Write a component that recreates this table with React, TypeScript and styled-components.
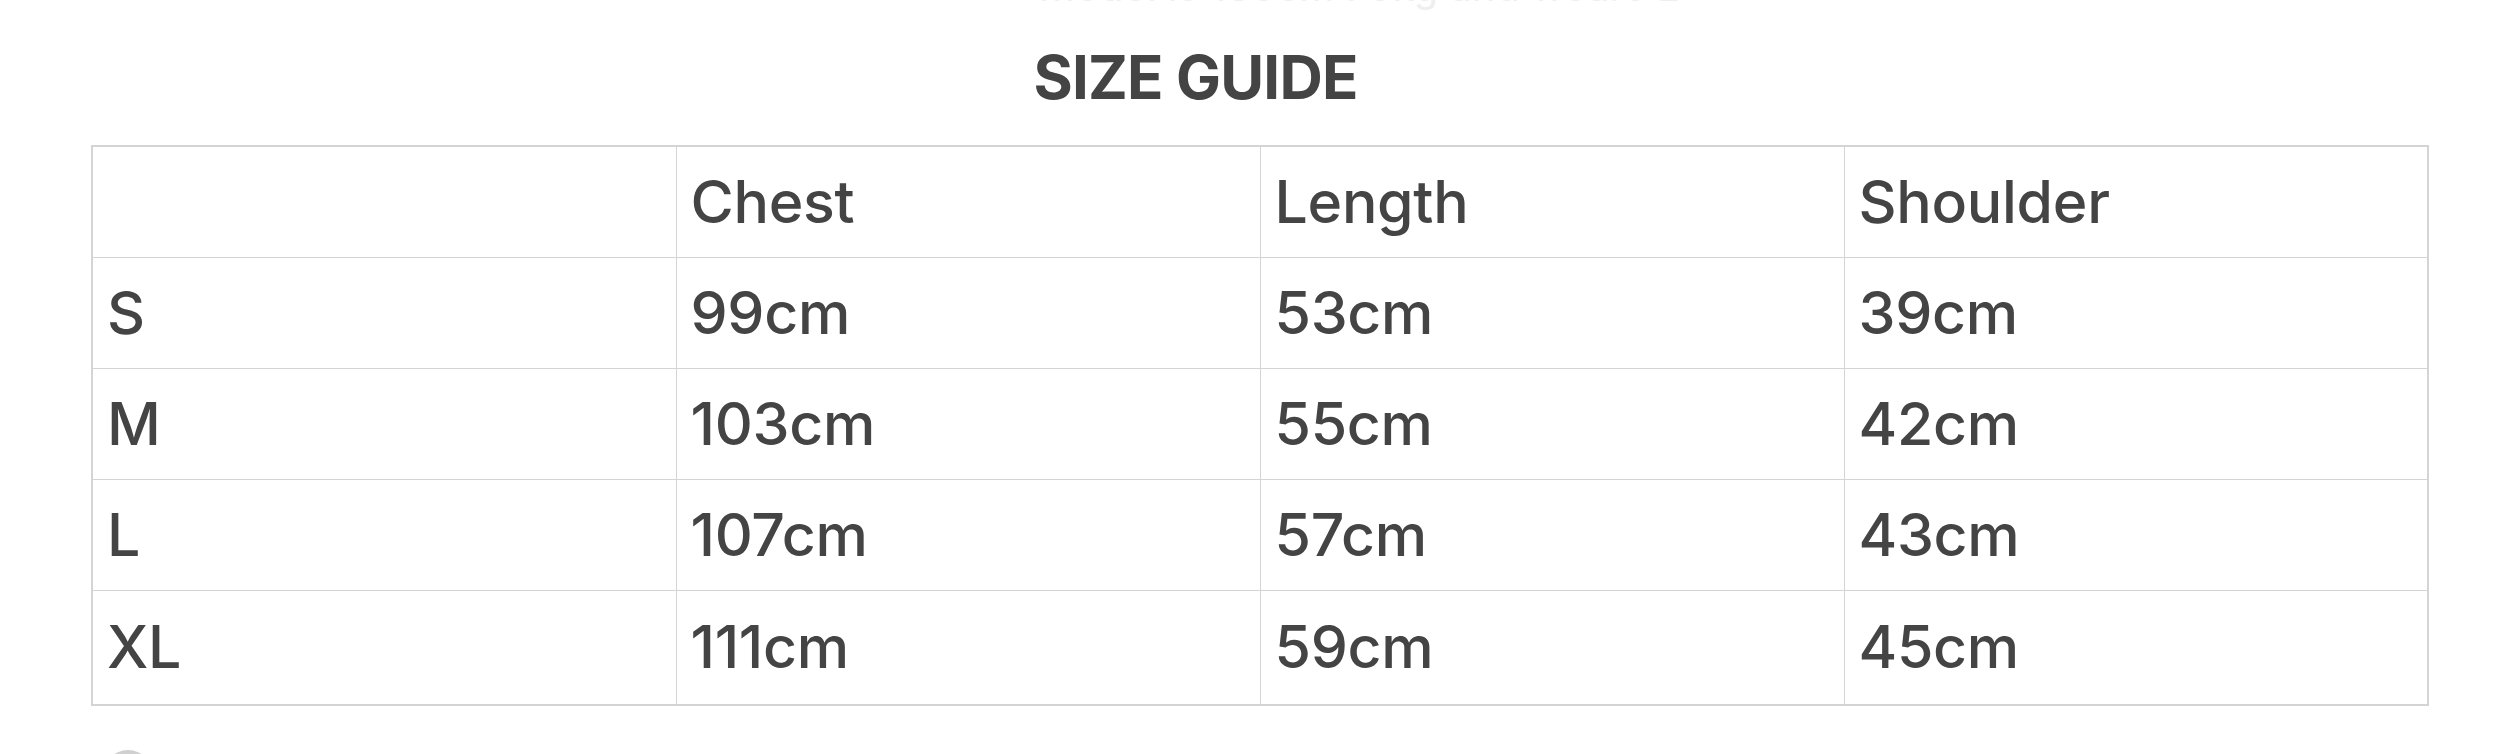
import React from 'react';
import styled, { createGlobalStyle } from 'styled-components';

const GlobalStyle = createGlobalStyle`
  html, body {
    margin: 0;
    padding: 0;
    background: #ffffff;
  }
  body {
    font-family: Inter, 'Liberation Sans', Arial, sans-serif;
    color: #444444;
  }
`;

interface SizeRow {
  size: string;
  chest: string;
  length: string;
  shoulder: string;
}

const rows: SizeRow[] = [
  { size: 'S', chest: '99cm', length: '53cm', shoulder: '39cm' },
  { size: 'M', chest: '103cm', length: '55cm', shoulder: '42cm' },
  { size: 'L', chest: '107cm', length: '57cm', shoulder: '43cm' },
  { size: 'XL', chest: '111cm', length: '59cm', shoulder: '45cm' }
];

const headers = ['', 'Chest', 'Length', 'Shoulder'];

const App = () => {
  return (
    <>
      <GlobalStyle />
      <S.Page>
        <S.Caption>Model is 180cm 70kg and wears L</S.Caption>
        <S.Title>SIZE GUIDE</S.Title>
        <S.Table>
          <colgroup>
            {headers.map((_, i) => (
              <col key={i} />
            ))}
          </colgroup>
          <tbody>
            <S.Row>
              {headers.map((h, i) => (
                <S.Cell key={i}>{h}</S.Cell>
              ))}
            </S.Row>
            {rows.map((row, i) => (
              <S.Row key={row.size} $last={i === rows.length - 1}>
                <S.Cell>{row.size}</S.Cell>
                <S.Cell>{row.chest}</S.Cell>
                <S.Cell>{row.length}</S.Cell>
                <S.Cell>{row.shoulder}</S.Cell>
              </S.Row>
            ))}
          </tbody>
        </S.Table>
        <S.Footer>
          <S.Avatar />
        </S.Footer>
      </S.Page>
    </>
  );
};

export default App;

const S = {
  Page: styled.div`
    width: 2502px;
    height: 754px;
    overflow: hidden;
    padding: 0 73px 0 91px;
    box-sizing: border-box;
    display: flex;
    flex-direction: column;
  `,
  Caption: styled.div`
    margin-top: -36px;
    height: 46px;
    padding-left: 948px;
    font-size: 40px;
    line-height: 46px;
    color: #efefef;
    white-space: nowrap;
  `,
  Title: styled.h1`
    margin: 37px 129px 0 0;
    height: 60px;
    text-align: center;
    font-size: 60px;
    line-height: 60px;
    font-weight: 700;
    letter-spacing: -0.8px;
    color: #444444;
  `,
  Table: styled.table`
    margin-top: 38px;
    width: 2338px;
    table-layout: fixed;
    border-collapse: collapse;
    border: 2px solid #d4d4d4;
  `,
  Row: styled.tr<{ $last?: boolean }>`
    height: ${({ $last }) => ($last ? '115px' : '111px')};
  `,
  Cell: styled.td`
    padding: 0 14px;
    border: 1px solid #d4d4d4;
    font-size: 59px;
    line-height: 60px;
    font-weight: 500;
    letter-spacing: -0.3px;
    color: #444444;
    vertical-align: middle;
    white-space: nowrap;
  `,
  Footer: styled.div`
    display: flex;
    padding: 44px 0 0 12px;
  `,
  Avatar: styled.div`
    width: 50px;
    height: 50px;
    border-radius: 50%;
    background: #d0d0d0;
  `
};
